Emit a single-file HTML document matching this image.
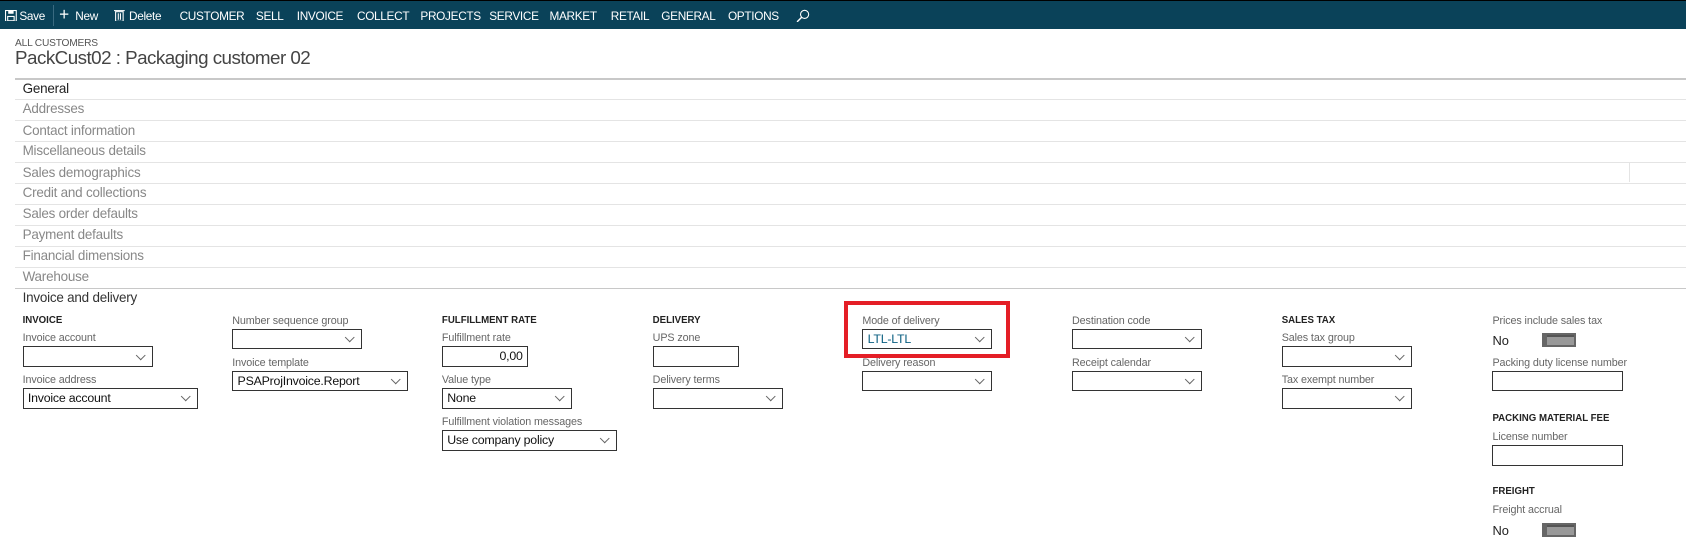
<!DOCTYPE html>
<html><head><meta charset="utf-8"><style>
html,body{margin:0;padding:0;background:#fff;overflow:hidden}
#w{position:relative;width:1568px;height:507px;zoom:1.07526;font-family:"Liberation Sans",sans-serif;color:#333}
.a{position:absolute;white-space:nowrap}
.nav{left:0;top:0;width:1568px;height:27px;background:#0a4259;border-top:1px solid #000;box-sizing:border-box}
.nav span{position:absolute;top:7px;color:#fff;font-size:11px;letter-spacing:-0.3px}
.ln{position:absolute;left:14px;width:1554px;height:1px;background:#e4e4e4}
.tab{position:absolute;left:21px;font-size:12.5px;color:#888;letter-spacing:-0.2px}
.lab{position:absolute;font-size:10px;color:#666;letter-spacing:-0.1px}
.hd{position:absolute;font-size:9px;font-weight:bold;color:#222}
.f{position:absolute;height:19px;border:1px solid #333;box-sizing:border-box;background:#fff;font-size:11.5px;color:#111;padding:2px 4px;line-height:14px;letter-spacing:-0.2px}
.f.d::after{content:"";position:absolute;right:7px;top:4px;width:6px;height:6px;border-right:1px solid #666;border-bottom:1px solid #666;transform:rotate(45deg)}
.tg{position:absolute;width:32px;height:13px;background:#666;box-sizing:border-box;border:2px solid #666;border-left-width:5px}
.tg::after{content:"";position:absolute;left:0;top:0;right:0;bottom:0;background:#999;border-top:2px solid #555}
.no{position:absolute;font-size:12px;color:#222}
</style></head><body><div id="w">
<div class="a nav">
<svg style="position:absolute;left:5px;top:8px" width="11" height="11" viewBox="0 0 11 11"><rect x=".5" y=".5" width="10" height="10" fill="none" stroke="#fff"/><rect x="3" y=".5" width="5" height="3" fill="#fff"/><rect x="2.5" y="6" width="6" height="4" fill="none" stroke="#fff"/></svg>
<span style="left:18px">Save</span>
<div style="position:absolute;left:49px;top:4px;width:1px;height:19px;background:#3a6a80"></div>
<span style="left:55px;font-size:16px;top:3px;font-weight:normal">+</span><span style="left:70px">New</span>
<svg style="position:absolute;left:106px;top:7px" width="10" height="12" viewBox="0 0 10 12"><rect x="1.5" y="2.5" width="7" height="9" fill="none" stroke="#fff"/><line x1="0" y1="1.5" x2="10" y2="1.5" stroke="#fff"/><line x1="4" y1="4" x2="4" y2="10" stroke="#fff"/><line x1="6" y1="4" x2="6" y2="10" stroke="#fff"/></svg>
<span style="left:120px">Delete</span>
<span style="left:167px">CUSTOMER</span><span style="left:238px">SELL</span><span style="left:276px">INVOICE</span><span style="left:332px">COLLECT</span><span style="left:391px">PROJECTS</span><span style="left:455px">SERVICE</span><span style="left:511px">MARKET</span><span style="left:568px">RETAIL</span><span style="left:615px">GENERAL</span><span style="left:677px">OPTIONS</span>
<svg style="position:absolute;left:740px;top:7px" width="13" height="13" viewBox="0 0 13 13"><circle cx="8" cy="5" r="3.8" fill="none" stroke="#fff"/><line x1="5.3" y1="7.7" x2="1" y2="12" stroke="#fff" stroke-width="1.3"/></svg>
</div>
<div class="a" style="left:14px;top:35px;font-size:9.5px;color:#555;letter-spacing:-0.2px">ALL CUSTOMERS</div>
<div class="a" style="left:14px;top:44px;font-size:17.5px;color:#444;letter-spacing:-0.5px">PackCust02 : Packaging customer 02</div>
<div class="ln" style="top:73px;background:#c8c8c8"></div>
<div class="tab" style="top:75px;color:#222">General</div>
<div class="ln" style="top:92px"></div><div class="tab" style="top:94px">Addresses</div>
<div class="ln" style="top:112px"></div><div class="tab" style="top:114px">Contact information</div>
<div class="ln" style="top:131px"></div><div class="tab" style="top:133px">Miscellaneous details</div>
<div class="ln" style="top:151px"></div><div class="tab" style="top:153px">Sales demographics</div>
<div class="a" style="left:1515px;top:152px;width:1px;height:17px;background:#e4e4e4"></div>
<div class="ln" style="top:170px"></div><div class="tab" style="top:172px">Credit and collections</div>
<div class="ln" style="top:190px"></div><div class="tab" style="top:192px">Sales order defaults</div>
<div class="ln" style="top:209px"></div><div class="tab" style="top:211px">Payment defaults</div>
<div class="ln" style="top:229px"></div><div class="tab" style="top:231px">Financial dimensions</div>
<div class="ln" style="top:248px"></div><div class="tab" style="top:250px">Warehouse</div>
<div class="ln" style="top:268px;background:#c8c8c8"></div><div class="tab" style="top:270px;color:#333">Invoice and delivery</div>

<div class="hd" style="left:21px;top:293px">INVOICE</div>
<div class="lab" style="left:21px;top:309px">Invoice account</div>
<div class="f d" style="left:21px;top:322px;width:121px"></div>
<div class="lab" style="left:21px;top:348px">Invoice address</div>
<div class="f d" style="left:21px;top:361px;width:163px">Invoice account</div>

<div class="lab" style="left:216px;top:293px">Number sequence group</div>
<div class="f d" style="left:216px;top:306px;width:121px"></div>
<div class="lab" style="left:216px;top:332px">Invoice template</div>
<div class="f d" style="left:216px;top:345px;width:163px">PSAProjInvoice.Report</div>

<div class="hd" style="left:411px;top:293px">FULFILLMENT RATE</div>
<div class="lab" style="left:411px;top:309px">Fulfillment rate</div>
<div class="f" style="left:411px;top:322px;width:80px;text-align:right">0,00</div>
<div class="lab" style="left:411px;top:348px">Value type</div>
<div class="f d" style="left:411px;top:361px;width:121px">None</div>
<div class="lab" style="left:411px;top:387px">Fulfillment violation messages</div>
<div class="f d" style="left:411px;top:400px;width:163px">Use company policy</div>

<div class="hd" style="left:607px;top:293px">DELIVERY</div>
<div class="lab" style="left:607px;top:309px">UPS zone</div>
<div class="f" style="left:607px;top:322px;width:80px"></div>
<div class="lab" style="left:607px;top:348px">Delivery terms</div>
<div class="f d" style="left:607px;top:361px;width:121px"></div>

<div class="lab" style="left:802px;top:293px">Mode of delivery</div>
<div class="f d" style="left:802px;top:306px;width:121px;color:#0a5e80">LTL-LTL</div>
<div class="lab" style="left:802px;top:332px">Delivery reason</div>
<div class="f d" style="left:802px;top:345px;width:121px"></div>
<div class="a" style="left:785px;top:280px;width:154px;height:53px;border:4px solid #e41e26;box-sizing:border-box"></div>

<div class="lab" style="left:997px;top:293px">Destination code</div>
<div class="f d" style="left:997px;top:306px;width:121px"></div>
<div class="lab" style="left:997px;top:332px">Receipt calendar</div>
<div class="f d" style="left:997px;top:345px;width:121px"></div>

<div class="hd" style="left:1192px;top:293px">SALES TAX</div>
<div class="lab" style="left:1192px;top:309px">Sales tax group</div>
<div class="f d" style="left:1192px;top:322px;width:121px"></div>
<div class="lab" style="left:1192px;top:348px">Tax exempt number</div>
<div class="f d" style="left:1192px;top:361px;width:121px"></div>

<div class="lab" style="left:1388px;top:293px">Prices include sales tax</div>
<div class="no" style="left:1388px;top:310px">No</div><div class="tg" style="left:1434px;top:310px"></div>
<div class="lab" style="left:1388px;top:332px">Packing duty license number</div>
<div class="f" style="left:1388px;top:345px;width:121px"></div>
<div class="hd" style="left:1388px;top:384px">PACKING MATERIAL FEE</div>
<div class="lab" style="left:1388px;top:401px">License number</div>
<div class="f" style="left:1388px;top:414px;width:121px"></div>
<div class="hd" style="left:1388px;top:452px">FREIGHT</div>
<div class="lab" style="left:1388px;top:469px">Freight accrual</div>
<div class="no" style="left:1388px;top:486px">No</div><div class="tg" style="left:1434px;top:486px"></div>
</div></body></html>
